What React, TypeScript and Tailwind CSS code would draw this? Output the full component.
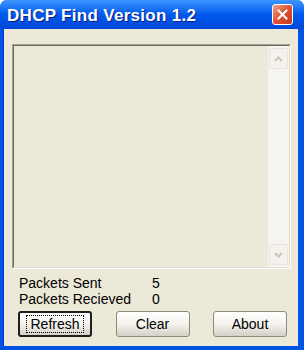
import React from "react";

const XpButton: React.FC<{ label: string; focused?: boolean }> = ({ label, focused }) => (
  <button
    className={`h-[26px] w-[74px] rounded-[3px] bg-gradient-to-b from-[#ffffff] via-[#f4f3ee] to-[#d6d0c5] text-[14px] text-black ${
      focused ? "border-2 border-[#1f1f1f]" : "border border-[#8c8a80]"
    } flex items-center justify-center`}
  >
    <span
      className={`px-[3px] leading-[16px] ${focused ? "outline outline-1 outline-dotted outline-black" : ""}`}
    >
      {label}
    </span>
  </button>
);

const ScrollArrow: React.FC<{ up?: boolean }> = ({ up }) => (
  <div className="h-[21px] w-[19px] rounded-[2px] border border-[#e6e4dc] bg-[#f3f2ec] flex items-center justify-center">
    <svg width="9" height="6" viewBox="0 0 9 6">
      <path
        d={up ? "M1 5 L4.5 1.5 L8 5" : "M1 1 L4.5 4.5 L8 1"}
        stroke="#c9c7ba"
        strokeWidth="2"
        fill="none"
      />
    </svg>
  </div>
);

export default function App() {
  return (
    <div
      className="flex h-[350px] w-[304px] flex-col overflow-hidden rounded-t-[7px] bg-[#0054e3]"
      style={{ fontFamily: '"Liberation Sans", Arial, sans-serif' }}
    >
      {/* Title bar */}
      <div className="flex h-[29px] items-center justify-between bg-gradient-to-b from-[#3d95ff] via-[#0058ee] to-[#0048d8] pl-[7px] pr-[11px]">
        <span
          className="pt-[2px] text-[17px] font-bold tracking-[0.3px] text-white"
          style={{ textShadow: "1px 1px 0 #0a1e80" }}
        >
          DHCP Find Version 1.2
        </span>
        <div className="flex h-[21px] w-[21px] items-center justify-center rounded-[3px] border border-white bg-gradient-to-br from-[#f0a089] via-[#e0512f] to-[#c0381c]">
          <svg width="11" height="11" viewBox="0 0 11 11">
            <path d="M1.5 1.5 L9.5 9.5 M9.5 1.5 L1.5 9.5" stroke="white" strokeWidth="2" strokeLinecap="square" />
          </svg>
        </div>
      </div>

      {/* Client area */}
      <div className="mb-[4px] ml-[3px] mr-[6px] flex flex-1 flex-col border-l border-[#0831d9] bg-[#ece9d8] pl-[8px] pr-[7px] pt-[15px]">
        {/* List box */}
        <div className="flex h-[225px] border border-t-[#a09e94] border-l-[#a09e94] border-r-[#ffffff] border-b-[#ffffff]">
          <div className="flex flex-1 border border-t-[#6f6d64] border-l-[#6f6d64] border-r-[#e2dfd2] border-b-[#e2dfd2]">
            <div className="flex-1 bg-[#ece9d8]" />
            <div className="flex w-[21px] flex-col justify-between bg-[#f5f4ef] px-[1px] py-[2px]">
              <ScrollArrow up />
              <ScrollArrow />
            </div>
          </div>
        </div>

        {/* Counters */}
        <div className="mt-[6px] pl-[7px] text-[14px] leading-[16px] text-black">
          <div className="flex">
            <span className="w-[133px]">Packets Sent</span>
            <span>5</span>
          </div>
          <div className="flex">
            <span className="w-[133px]">Packets Recieved</span>
            <span>0</span>
          </div>
        </div>

        {/* Buttons */}
        <div className="mt-[4px] flex justify-between pl-[6px] pr-[4px]">
          <XpButton label="Refresh" focused />
          <XpButton label="Clear" />
          <XpButton label="About" />
        </div>
      </div>
    </div>
  );
}
